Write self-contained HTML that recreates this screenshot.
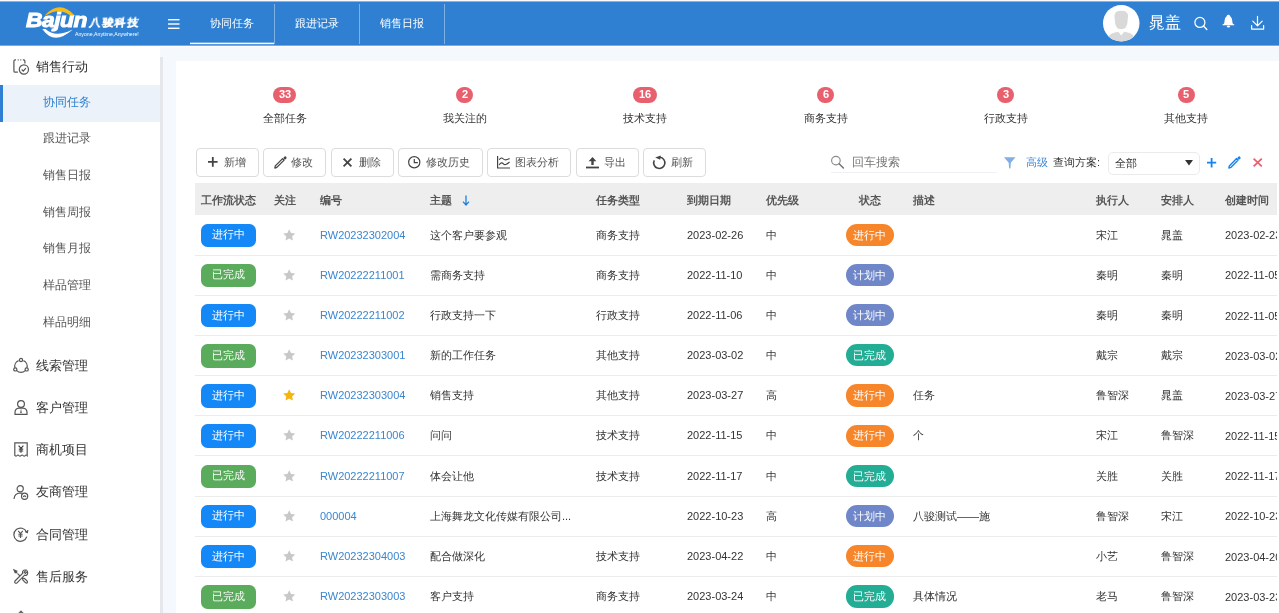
<!DOCTYPE html><html><head><meta charset="utf-8"><style>
html,body{margin:0;padding:0;width:1279px;height:613px;overflow:hidden;background:#fff;font-family:"Liberation Sans",sans-serif;}
.t{position:absolute;line-height:20px;white-space:nowrap;will-change:transform;}
.a{position:absolute;}
svg{position:absolute;overflow:visible;}
</style></head><body>
<div class="a" style="left:0;top:0;width:1279px;height:1px;background:#fafafa"></div>
<div class="a" style="left:0;top:1px;width:1279px;height:45px;background:#2f80d2"></div>
<div class="a" style="left:0;top:1px;width:1279px;height:1px;background:#8fb0d8"></div>
<div class="a" style="left:0;top:45px;width:1279px;height:1px;background:#7ea9dc"></div>
<div class="a" style="left:160px;top:47px;width:1119px;height:566px;background:#f5f8fd"></div>
<div class="a" style="left:160px;top:57px;width:3px;height:556px;background:#e6e7ea"></div>
<div class="a" style="left:176px;top:61px;width:1103px;height:552px;background:#fff"></div>
<svg style="left:0;top:0" width="160" height="46" viewBox="0 0 160 46">
<path d="M45 15.2 Q60 -1.2 75.2 16 L71 16.3 Q60 6.5 45.6 15.6 Z" fill="#f6bb17"/>
<path d="M42.3 29 Q54 46 72.5 29.8 L71.5 30 Q55 38 45.5 29 Z" fill="#fff"/>
</svg>
<div class="t" style="left:25.5px;top:10.4px;font-size:20px;line-height:20px;font-weight:bold;font-style:italic;color:#fff;letter-spacing:-0.4px;-webkit-text-stroke:1px #fff;transform:scaleX(1.14);transform-origin:0 0">Bajun</div>
<div class="t" style="left:88.6px;top:11.5px;font-size:11px;line-height:20px;font-weight:bold;color:#fff;letter-spacing:1.6px;-webkit-text-stroke:0.3px #fff;transform:skewX(-8deg) scaleY(0.95);transform-origin:0 15px">八骏科技</div>
<div class="t" style="left:74.5px;top:29px;font-size:5.2px;line-height:10px;color:#fff;">Anyone,Anytime,Anywhere!</div>
<svg style="left:168px;top:18px" width="12" height="12" viewBox="0 0 12 12"><rect x="0" y="1" width="11.5" height="1.4" fill="#fff"/><rect x="0" y="5.3" width="11.5" height="1.4" fill="#fff"/><rect x="0" y="9.6" width="11.5" height="1.4" fill="#fff"/></svg>
<div class="t" style="left:190.00px;width:84px;text-align:center;top:12.70px;font-size:11px;color:#fff;font-weight:normal;">协同任务</div>
<div class="a" style="left:274px;top:4px;width:1px;height:40px;background:rgba(255,255,255,0.38)"></div>
<div class="t" style="left:275.00px;width:84px;text-align:center;top:12.70px;font-size:11px;color:#fff;font-weight:normal;">跟进记录</div>
<div class="a" style="left:359px;top:4px;width:1px;height:40px;background:rgba(255,255,255,0.38)"></div>
<div class="t" style="left:360.00px;width:84px;text-align:center;top:12.70px;font-size:11px;color:#fff;font-weight:normal;">销售日报</div>
<div class="a" style="left:444px;top:4px;width:1px;height:40px;background:rgba(255,255,255,0.38)"></div>
<div class="a" style="left:190px;top:42px;width:84px;height:1px;background:rgba(255,255,255,0.35)"></div>
<div class="a" style="left:190px;top:43px;width:84px;height:1px;background:#fff"></div>
<div class="a" style="left:190px;top:44px;width:84px;height:1px;background:rgba(255,255,255,0.2)"></div>
<svg style="left:1102.6px;top:4.6px" width="36.5" height="36.5" viewBox="0 0 37 37">
<circle cx="18.5" cy="18.5" r="18.5" fill="#fff"/>
<clipPath id="avc"><circle cx="18.5" cy="18.5" r="18.5"/></clipPath>
<g clip-path="url(#avc)" fill="#d9d9d9">
<path d="M11.6 11 Q11.6 5.8 18.5 5.8 Q25.4 5.8 25.4 11 L24.8 17.5 Q24.2 24.6 18.5 24.6 Q12.8 24.6 12.2 17.5 Z"/>
<path d="M4 37 Q5 29 12 28 L15.5 27 L18.5 31 L21.5 27 L25 28 Q32 29 33 37 Z"/>
</g></svg>
<div class="t" style="left:1149px;top:13.10px;font-size:16px;color:#fff;font-weight:normal;">晁盖</div>
<svg style="left:1194px;top:16.5px" width="14" height="14" viewBox="0 0 14 14"><circle cx="5.9" cy="5.4" r="5" fill="none" stroke="#fff" stroke-width="1.25"/><line x1="9.5" y1="9.1" x2="12.8" y2="12.4" stroke="#fff" stroke-width="1.4" stroke-linecap="round"/></svg>
<svg style="left:1222px;top:14px" width="13" height="14" viewBox="0 0 13 14"><path d="M6.4 0.8 Q7.7 0.8 8.2 2.2 Q10 3.4 10.2 6.6 L10.5 9 Q10.9 10.1 12.3 10.6 L12.3 11.3 L0.5 11.3 L0.5 10.6 Q1.9 10.1 2.3 9 L2.6 6.6 Q2.8 3.4 4.6 2.2 Q5.1 0.8 6.4 0.8 Z" fill="#fff"/><ellipse cx="6.4" cy="12.5" rx="1.7" ry="1.05" fill="#fff"/></svg>
<svg style="left:1250px;top:16px" width="15" height="14" viewBox="0 0 15 14"><path d="M7.5 0.4 L7.5 9.8 M2.8 5.2 L7.5 9.9 L12.2 5.2" fill="none" stroke="#fff" stroke-width="1.2" stroke-linecap="round" stroke-linejoin="round"/><path d="M1.6 9.6 L1.6 13 L13.6 13 L13.6 9.6" fill="none" stroke="#fff" stroke-width="1.25" stroke-linecap="round" stroke-linejoin="round"/></svg>
<svg style="left:13px;top:59.2px" width="16" height="16" viewBox="0 0 16 16"><path d="M4.8 13.2 L2.2 13.2 Q0.9 13.2 0.9 11.9 L0.9 2.2 Q0.9 0.9 2.2 0.9 L3 0.9 M4.7 0.9 L5.7 0.9 M7.3 0.9 L8.3 0.9 M9.9 0.9 L10.6 0.9 Q11.9 0.9 11.9 2.2 L11.9 4.4" fill="none" stroke="#555" stroke-width="1.2"/><circle cx="10.9" cy="10.5" r="4.6" fill="#fff" stroke="#555" stroke-width="1.2"/><path d="M8.7 10.5 L10.3 12.1 L12.9 9.2" fill="none" stroke="#555" stroke-width="1.2"/></svg>
<div class="t" style="left:36px;top:56.50px;font-size:13px;color:#333;font-weight:normal;">销售行动</div>
<div class="a" style="left:0;top:85px;width:160px;height:36.5px;background:#ebf2fa"></div>
<div class="a" style="left:0;top:85px;width:3px;height:36.5px;background:#2f80d2"></div>
<div class="t" style="left:43px;top:91.60px;font-size:12px;color:#2f80d2;font-weight:normal;">协同任务</div>
<div class="t" style="left:43px;top:128.25px;font-size:12px;color:#555;font-weight:normal;">跟进记录</div>
<div class="t" style="left:43px;top:164.90px;font-size:12px;color:#555;font-weight:normal;">销售日报</div>
<div class="t" style="left:43px;top:201.55px;font-size:12px;color:#555;font-weight:normal;">销售周报</div>
<div class="t" style="left:43px;top:238.20px;font-size:12px;color:#555;font-weight:normal;">销售月报</div>
<div class="t" style="left:43px;top:274.85px;font-size:12px;color:#555;font-weight:normal;">样品管理</div>
<div class="t" style="left:43px;top:311.50px;font-size:12px;color:#555;font-weight:normal;">样品明细</div>
<div class="t" style="left:36px;top:355.50px;font-size:13px;color:#333;font-weight:normal;">线索管理</div>
<div class="t" style="left:36px;top:397.78px;font-size:13px;color:#333;font-weight:normal;">客户管理</div>
<div class="t" style="left:36px;top:440.06px;font-size:13px;color:#333;font-weight:normal;">商机项目</div>
<div class="t" style="left:36px;top:482.34px;font-size:13px;color:#333;font-weight:normal;">友商管理</div>
<div class="t" style="left:36px;top:524.62px;font-size:13px;color:#333;font-weight:normal;">合同管理</div>
<div class="t" style="left:36px;top:566.90px;font-size:13px;color:#333;font-weight:normal;">售后服务</div>
<svg style="left:13px;top:358px" width="16" height="15" viewBox="0 0 16 15"><path d="M5.6 2.6 A6 6 0 0 0 2 9.8 M13.9 9.8 A6 6 0 0 0 10.4 2.6 M3.8 12.6 A6 6 0 0 0 12.2 12.6" fill="none" stroke="#555" stroke-width="1.2"/><circle cx="8" cy="2" r="1.6" fill="#fff" stroke="#555" stroke-width="1.2"/><circle cx="2.3" cy="11.4" r="1.6" fill="#fff" stroke="#555" stroke-width="1.2"/><circle cx="13.7" cy="11.4" r="1.6" fill="#fff" stroke="#555" stroke-width="1.2"/></svg>
<svg style="left:14px;top:400px" width="14" height="15" viewBox="0 0 14 15"><circle cx="7" cy="4" r="3.4" fill="none" stroke="#555" stroke-width="1.2"/><path d="M1 14.3 L1 12.5 Q1 8.6 5 8.2 L9 8.2 Q13 8.6 13 12.5 L13 14.3 Z" fill="none" stroke="#555" stroke-width="1.2"/><path d="M7 8.6 L6.2 12.5 L7 13.6 L7.8 12.5 Z" fill="#666"/></svg>
<svg style="left:14px;top:442px" width="14" height="15" viewBox="0 0 14 15"><path d="M0.8 0.8 L13.2 0.8 L13.2 13.6 Q12.2 12.4 11.2 13.6 Q10.2 14.6 9.2 13.6 Q8.2 12.4 7 13.6 Q6 14.6 5 13.6 Q4 12.4 2.9 13.6 Q1.9 14.6 0.8 13.4 Z" fill="none" stroke="#555" stroke-width="1.2"/><path d="M4.6 3.6 L7 6.4 L9.4 3.6 M7 6.4 L7 10.8 M4.8 7.2 L9.2 7.2 M4.8 9 L9.2 9" fill="none" stroke="#444" stroke-width="1.2"/></svg>
<svg style="left:13px;top:485px" width="16" height="15" viewBox="0 0 16 15"><circle cx="7.2" cy="3.8" r="3.1" fill="none" stroke="#555" stroke-width="1.2"/><path d="M1 14 Q1.4 8.2 7.2 8 Q8.6 8 9.6 8.4" fill="none" stroke="#555" stroke-width="1.2"/><circle cx="11.6" cy="11.2" r="3.1" fill="none" stroke="#555" stroke-width="1.2"/><path d="M10.2 11.8 Q11.6 10 13 11.8" fill="none" stroke="#555" stroke-width="1.1"/></svg>
<svg style="left:13px;top:527px" width="16" height="15" viewBox="0 0 16 15"><path d="M13.6 5.2 A6.6 6.6 0 1 0 13.8 9.6" fill="none" stroke="#555" stroke-width="1.2"/><path d="M12.2 4.4 L14.4 5.6 L14.8 3" fill="none" stroke="#555" stroke-width="1.2"/><path d="M5.2 3.8 L7.5 6.6 L9.8 3.8 M7.5 6.6 L7.5 11 M5.4 7.3 L9.6 7.3 M5.4 9 L9.6 9" fill="none" stroke="#555" stroke-width="1.1"/></svg>
<svg style="left:13px;top:569px" width="16" height="15" viewBox="0 0 16 15"><path d="M1.6 1.6 L4.4 4.4 M3.8 2.2 L2.2 3.8 L1 1 Z" fill="none" stroke="#555" stroke-width="1.2"/><path d="M4.6 4.6 L9.4 9.4 L10 11.2 L12.6 13.8 Q13.6 14.4 14.2 13.8 Q14.8 13.2 14.2 12.2 L11.6 9.6 L9.8 9 " fill="none" stroke="#555" stroke-width="1.2"/><path d="M14.4 2.4 L12.4 4.4 L11.2 3.2 L13.2 1.2 Q10.4 0.4 9.6 2.6 Q9.4 3.6 9.8 4.2 L2 12 Q1.2 13.2 2.2 14 Q3.2 14.6 4 13.8 L11.6 6.2 Q12.4 6.6 13.2 6.4 Q15.2 5.6 14.4 2.4 Z" fill="#fff" stroke="#555" stroke-width="1.2"/></svg>
<svg style="left:17px;top:606px" width="8" height="7" viewBox="0 0 8 7"><path d="M4 4.3 L1.3 7 L6.7 7 Z" fill="#666"/></svg>
<div class="a" style="left:272.75px;top:86.8px;width:23.5px;height:16.5px;border-radius:8.5px;background:#e8606e"></div>
<div class="t" style="left:264.50px;width:40px;text-align:center;top:84.30px;font-size:11px;color:#fff;font-weight:bold;">33</div>
<div class="t" style="left:234.50px;width:100px;text-align:center;top:107.70px;font-size:11px;color:#333;font-weight:normal;">全部任务</div>
<div class="a" style="left:456.36px;top:86.8px;width:17px;height:16.5px;border-radius:8.5px;background:#e8606e"></div>
<div class="t" style="left:444.86px;width:40px;text-align:center;top:84.30px;font-size:11px;color:#fff;font-weight:bold;">2</div>
<div class="t" style="left:414.86px;width:100px;text-align:center;top:107.70px;font-size:11px;color:#333;font-weight:normal;">我关注的</div>
<div class="a" style="left:633.47px;top:86.8px;width:23.5px;height:16.5px;border-radius:8.5px;background:#e8606e"></div>
<div class="t" style="left:625.22px;width:40px;text-align:center;top:84.30px;font-size:11px;color:#fff;font-weight:bold;">16</div>
<div class="t" style="left:595.22px;width:100px;text-align:center;top:107.70px;font-size:11px;color:#333;font-weight:normal;">技术支持</div>
<div class="a" style="left:817.08px;top:86.8px;width:17px;height:16.5px;border-radius:8.5px;background:#e8606e"></div>
<div class="t" style="left:805.58px;width:40px;text-align:center;top:84.30px;font-size:11px;color:#fff;font-weight:bold;">6</div>
<div class="t" style="left:775.58px;width:100px;text-align:center;top:107.70px;font-size:11px;color:#333;font-weight:normal;">商务支持</div>
<div class="a" style="left:997.44px;top:86.8px;width:17px;height:16.5px;border-radius:8.5px;background:#e8606e"></div>
<div class="t" style="left:985.94px;width:40px;text-align:center;top:84.30px;font-size:11px;color:#fff;font-weight:bold;">3</div>
<div class="t" style="left:955.94px;width:100px;text-align:center;top:107.70px;font-size:11px;color:#333;font-weight:normal;">行政支持</div>
<div class="a" style="left:1177.80px;top:86.8px;width:17px;height:16.5px;border-radius:8.5px;background:#e8606e"></div>
<div class="t" style="left:1166.30px;width:40px;text-align:center;top:84.30px;font-size:11px;color:#fff;font-weight:bold;">5</div>
<div class="t" style="left:1136.30px;width:100px;text-align:center;top:107.70px;font-size:11px;color:#333;font-weight:normal;">其他支持</div>
<div class="a" style="left:196px;top:148px;width:61.0px;height:26.6px;border:1px solid #dcdcdc;border-radius:4px;background:#fff"></div>
<div class="t" style="left:224px;top:151.50px;font-size:11px;color:#555;font-weight:normal;">新增</div>
<div class="a" style="left:263px;top:148px;width:61.0px;height:26.6px;border:1px solid #dcdcdc;border-radius:4px;background:#fff"></div>
<div class="t" style="left:291.3px;top:151.50px;font-size:11px;color:#555;font-weight:normal;">修改</div>
<div class="a" style="left:330.5px;top:148px;width:61.0px;height:26.6px;border:1px solid #dcdcdc;border-radius:4px;background:#fff"></div>
<div class="t" style="left:358.5px;top:151.50px;font-size:11px;color:#555;font-weight:normal;">删除</div>
<div class="a" style="left:398px;top:148px;width:82.5px;height:26.6px;border:1px solid #dcdcdc;border-radius:4px;background:#fff"></div>
<div class="t" style="left:425.6px;top:151.50px;font-size:11px;color:#555;font-weight:normal;">修改历史</div>
<div class="a" style="left:486.5px;top:148px;width:82.5px;height:26.6px;border:1px solid #dcdcdc;border-radius:4px;background:#fff"></div>
<div class="t" style="left:515px;top:151.50px;font-size:11px;color:#555;font-weight:normal;">图表分析</div>
<div class="a" style="left:575.5px;top:148px;width:61.0px;height:26.6px;border:1px solid #dcdcdc;border-radius:4px;background:#fff"></div>
<div class="t" style="left:603.8px;top:151.50px;font-size:11px;color:#555;font-weight:normal;">导出</div>
<div class="a" style="left:642.5px;top:148px;width:61.0px;height:26.6px;border:1px solid #dcdcdc;border-radius:4px;background:#fff"></div>
<div class="t" style="left:671px;top:151.50px;font-size:11px;color:#555;font-weight:normal;">刷新</div>
<svg style="left:208.4px;top:157px" width="10" height="10" viewBox="0 0 10 10"><path d="M4.8 0 L4.8 9.7 M0 4.85 L9.6 4.85" stroke="#444" stroke-width="1.8"/></svg>
<svg style="left:273.5px;top:155.8px" width="13" height="13" viewBox="0 0 13 13"><path d="M0.9 12.1 L1.3 9.9 L8.6 2.6 L10.1 4.1 L2.8 11.4 Z" fill="none" stroke="#444" stroke-width="1.3" stroke-linejoin="round"/><path d="M9.3 1.9 L10.6 0.5 Q11.2 0 11.8 0.6 L12.4 1.2 Q12.9 1.8 12.4 2.4 L11 3.7 Z" fill="#444"/></svg>
<svg style="left:343px;top:158px" width="9" height="9" viewBox="0 0 9 9"><path d="M0.6 0.6 L8.4 8.4 M8.4 0.6 L0.6 8.4" stroke="#444" stroke-width="1.8"/></svg>
<svg style="left:407.8px;top:156px" width="13" height="13" viewBox="0 0 13 13"><circle cx="6.25" cy="6.25" r="5.6" fill="none" stroke="#444" stroke-width="1.2"/><path d="M6.3 3 L6.3 6.7 L9.8 6.7" fill="none" stroke="#444" stroke-width="1.2"/></svg>
<svg style="left:497px;top:156px" width="13" height="13" viewBox="0 0 13 13"><path d="M0.6 0 L0.6 12 L13 12" fill="none" stroke="#444" stroke-width="1.2"/><path d="M2.2 3.8 C3.8 1.4 5.2 1.6 6.4 3 C7.6 4.4 9.2 4.4 12.6 2.6 M2.2 9 C3.8 6.4 5.2 6.4 6.4 7.8 C7.6 9.2 9.4 8.8 12.6 6" fill="none" stroke="#444" stroke-width="1.1"/></svg>
<svg style="left:586px;top:156px" width="13" height="13" viewBox="0 0 13 13"><path d="M6.5 1 L2.6 5.2 L5.3 5.2 L5.3 9 L7.7 9 L7.7 5.2 L10.4 5.2 Z" fill="#444"/><rect x="0" y="10.6" width="13" height="1.8" fill="#444"/></svg>
<svg style="left:653px;top:156px" width="13" height="13" viewBox="0 0 13 13"><path d="M1.3 4.3 A5.6 5.6 0 1 0 6.9 1.3" fill="none" stroke="#444" stroke-width="1.6"/><path d="M2.2 1.4 L7.8 -0.6 L7.2 3.8 Z" fill="#444"/></svg>
<svg style="left:831px;top:155px" width="14" height="14" viewBox="0 0 14 14"><circle cx="4.9" cy="5.6" r="4.3" fill="none" stroke="#8a8a8a" stroke-width="1.15"/><path d="M8.1 8.8 L12.4 13" stroke="#777" stroke-width="1.6" stroke-linecap="round"/></svg>
<div class="t" style="left:851.5px;top:152.20px;font-size:12px;color:#777;font-weight:normal;">回车搜索</div>
<div class="a" style="left:831px;top:172px;width:166px;height:1px;background:#eef0f3"></div>
<svg style="left:1004px;top:157px" width="12" height="12" viewBox="0 0 12 12"><path d="M0 0.2 L11.5 0.2 L6.8 5.8 L6.5 11 Q5.8 12 5.1 11 L4.7 5.8 Z" fill="#7fb0e5"/></svg>
<div class="t" style="left:1026px;top:152.00px;font-size:11px;color:#3f86d6;font-weight:normal;">高级</div>
<div class="t" style="left:1052.7px;top:152.20px;font-size:11px;color:#333;font-weight:normal;">查询方案:</div>
<div class="a" style="left:1108px;top:151.6px;width:89.5px;height:21.4px;border:1px solid #ebebeb;border-radius:5px;background:#fff"></div>
<div class="t" style="left:1115px;top:152.80px;font-size:11px;color:#333;font-weight:normal;">全部</div>
<svg style="left:1184.5px;top:160px" width="8" height="6" viewBox="0 0 8 6"><path d="M0 0 L8 0 L4 5.6 Z" fill="#333"/></svg>
<svg style="left:1207px;top:158px" width="10" height="10" viewBox="0 0 10 10"><path d="M4.6 0 L4.6 9.4 M0 4.7 L9.2 4.7" stroke="#1584f2" stroke-width="1.8"/></svg>
<svg style="left:1228px;top:156px" width="13" height="13" viewBox="0 0 13 13"><path d="M0.9 12.1 L1.3 9.9 L8.6 2.6 L10.1 4.1 L2.8 11.4 Z" fill="none" stroke="#1584f2" stroke-width="1.4" stroke-linejoin="round"/><path d="M9.3 1.9 L10.6 0.5 Q11.2 0 11.8 0.6 L12.4 1.2 Q12.9 1.8 12.4 2.4 L11 3.7 Z" fill="#1584f2"/></svg>
<svg style="left:1253px;top:158.3px" width="9.5" height="9" viewBox="0 0 9.5 9"><path d="M0.6 0.6 L8.8 8.4 M8.8 0.6 L0.6 8.4" stroke="#e8606e" stroke-width="1.8"/></svg>
<div class="a" style="left:194.5px;top:183px;width:1082.5px;height:32px;background:#eeeeee"></div>
<div class="t" style="left:200.9px;top:190.20px;font-size:11px;color:#555;font-weight:bold;">工作流状态</div>
<div class="t" style="left:274.4px;top:190.20px;font-size:11px;color:#555;font-weight:bold;">关注</div>
<div class="t" style="left:320.4px;top:190.20px;font-size:11px;color:#555;font-weight:bold;">编号</div>
<div class="t" style="left:430.4px;top:190.20px;font-size:11px;color:#555;font-weight:bold;">主题</div>
<div class="t" style="left:595.5px;top:190.20px;font-size:11px;color:#555;font-weight:bold;">任务类型</div>
<div class="t" style="left:687px;top:190.20px;font-size:11px;color:#555;font-weight:bold;">到期日期</div>
<div class="t" style="left:765.8px;top:190.20px;font-size:11px;color:#555;font-weight:bold;">优先级</div>
<div class="t" style="left:913px;top:190.20px;font-size:11px;color:#555;font-weight:bold;">描述</div>
<div class="t" style="left:1096.3px;top:190.20px;font-size:11px;color:#555;font-weight:bold;">执行人</div>
<div class="t" style="left:1160.9px;top:190.20px;font-size:11px;color:#555;font-weight:bold;">安排人</div>
<div class="t" style="left:1224.7px;top:190.20px;font-size:11px;color:#555;font-weight:bold;">创建时间</div>
<div class="t" style="left:839.60px;width:60px;text-align:center;top:190.20px;font-size:11px;color:#555;font-weight:bold;">状态</div>
<svg style="left:462px;top:195px" width="8" height="11" viewBox="0 0 8 11"><path d="M4 0.5 L4 9.5 M1 6.6 L4 10 L7 6.6" fill="none" stroke="#1f7fe0" stroke-width="1.3"/></svg>
<div class="a" style="left:1224px;top:215px;width:53px;height:400px;overflow:hidden">
<div class="t" style="left:0.7px;top:10.30px;font-size:11px;color:#333">2023-02-23</div>
<div class="t" style="left:0.7px;top:50.47px;font-size:11px;color:#333">2022-11-05</div>
<div class="t" style="left:0.7px;top:90.64px;font-size:11px;color:#333">2022-11-05</div>
<div class="t" style="left:0.7px;top:130.81px;font-size:11px;color:#333">2023-03-02</div>
<div class="t" style="left:0.7px;top:170.98px;font-size:11px;color:#333">2023-03-27</div>
<div class="t" style="left:0.7px;top:211.15px;font-size:11px;color:#333">2022-11-15</div>
<div class="t" style="left:0.7px;top:251.32px;font-size:11px;color:#333">2022-11-17</div>
<div class="t" style="left:0.7px;top:291.49px;font-size:11px;color:#333">2022-10-23</div>
<div class="t" style="left:0.7px;top:331.66px;font-size:11px;color:#333">2023-04-20</div>
<div class="t" style="left:0.7px;top:371.83px;font-size:11px;color:#333">2023-03-23</div>
</div>
<div class="a" style="left:194.5px;top:254.50px;width:1082.5px;height:1px;background:#ececec"></div>
<div class="a" style="left:201.3px;top:223.60px;width:54.5px;height:23.5px;border-radius:6.5px;background:#1588f8"></div>
<div class="t" style="left:200.80px;width:54px;text-align:center;top:224.20px;font-size:11px;color:#fff;font-weight:normal;">进行中</div>
<svg style="left:282.6px;top:228.60px" width="13" height="13" viewBox="0 0 13 13"><path d="M6.20 0.20 L7.99 4.03 L12.19 4.55 L9.10 7.44 L9.90 11.60 L6.20 9.55 L2.50 11.60 L3.30 7.44 L0.21 4.55 L4.41 4.03 Z" fill="#c8c8c8"/></svg>
<div class="t" style="left:319.8px;top:224.50px;font-size:11px;color:#3a86d0;font-weight:normal;">RW20232302004</div>
<div class="t" style="left:430.4px;top:224.50px;font-size:11px;color:#333;font-weight:normal;">这个客户要参观</div>
<div class="t" style="left:595.5px;top:224.50px;font-size:11px;color:#333;font-weight:normal;">商务支持</div>
<div class="t" style="left:686.8px;top:224.50px;font-size:11px;color:#333;font-weight:normal;">2023-02-26</div>
<div class="t" style="left:766px;top:224.50px;font-size:11px;color:#333;font-weight:normal;">中</div>
<div class="a" style="left:845.6px;top:223.80px;width:48px;height:22.2px;border-radius:11px;background:#f7862b"></div>
<div class="t" style="left:846.10px;width:47px;text-align:center;top:224.50px;font-size:11px;color:#fff;font-weight:normal;">进行中</div>
<div class="t" style="left:1096.3px;top:224.50px;font-size:11px;color:#333;font-weight:normal;">宋江</div>
<div class="t" style="left:1160.9px;top:224.50px;font-size:11px;color:#333;font-weight:normal;">晁盖</div>
<div class="a" style="left:194.5px;top:294.67px;width:1082.5px;height:1px;background:#ececec"></div>
<div class="a" style="left:201.3px;top:263.77px;width:54.5px;height:23.5px;border-radius:6.5px;background:#5aab5b"></div>
<div class="t" style="left:200.80px;width:54px;text-align:center;top:264.37px;font-size:11px;color:#fff;font-weight:normal;">已完成</div>
<svg style="left:282.6px;top:268.77px" width="13" height="13" viewBox="0 0 13 13"><path d="M6.20 0.20 L7.99 4.03 L12.19 4.55 L9.10 7.44 L9.90 11.60 L6.20 9.55 L2.50 11.60 L3.30 7.44 L0.21 4.55 L4.41 4.03 Z" fill="#c8c8c8"/></svg>
<div class="t" style="left:319.8px;top:264.67px;font-size:11px;color:#3a86d0;font-weight:normal;">RW20222211001</div>
<div class="t" style="left:430.4px;top:264.67px;font-size:11px;color:#333;font-weight:normal;">需商务支持</div>
<div class="t" style="left:595.5px;top:264.67px;font-size:11px;color:#333;font-weight:normal;">商务支持</div>
<div class="t" style="left:686.8px;top:264.67px;font-size:11px;color:#333;font-weight:normal;">2022-11-10</div>
<div class="t" style="left:766px;top:264.67px;font-size:11px;color:#333;font-weight:normal;">中</div>
<div class="a" style="left:845.6px;top:263.97px;width:48px;height:22.2px;border-radius:11px;background:#6f87c9"></div>
<div class="t" style="left:846.10px;width:47px;text-align:center;top:264.67px;font-size:11px;color:#fff;font-weight:normal;">计划中</div>
<div class="t" style="left:1096.3px;top:264.67px;font-size:11px;color:#333;font-weight:normal;">秦明</div>
<div class="t" style="left:1160.9px;top:264.67px;font-size:11px;color:#333;font-weight:normal;">秦明</div>
<div class="a" style="left:194.5px;top:334.84px;width:1082.5px;height:1px;background:#ececec"></div>
<div class="a" style="left:201.3px;top:303.94px;width:54.5px;height:23.5px;border-radius:6.5px;background:#1588f8"></div>
<div class="t" style="left:200.80px;width:54px;text-align:center;top:304.54px;font-size:11px;color:#fff;font-weight:normal;">进行中</div>
<svg style="left:282.6px;top:308.94px" width="13" height="13" viewBox="0 0 13 13"><path d="M6.20 0.20 L7.99 4.03 L12.19 4.55 L9.10 7.44 L9.90 11.60 L6.20 9.55 L2.50 11.60 L3.30 7.44 L0.21 4.55 L4.41 4.03 Z" fill="#c8c8c8"/></svg>
<div class="t" style="left:319.8px;top:304.84px;font-size:11px;color:#3a86d0;font-weight:normal;">RW20222211002</div>
<div class="t" style="left:430.4px;top:304.84px;font-size:11px;color:#333;font-weight:normal;">行政支持一下</div>
<div class="t" style="left:595.5px;top:304.84px;font-size:11px;color:#333;font-weight:normal;">行政支持</div>
<div class="t" style="left:686.8px;top:304.84px;font-size:11px;color:#333;font-weight:normal;">2022-11-06</div>
<div class="t" style="left:766px;top:304.84px;font-size:11px;color:#333;font-weight:normal;">中</div>
<div class="a" style="left:845.6px;top:304.14px;width:48px;height:22.2px;border-radius:11px;background:#6f87c9"></div>
<div class="t" style="left:846.10px;width:47px;text-align:center;top:304.84px;font-size:11px;color:#fff;font-weight:normal;">计划中</div>
<div class="t" style="left:1096.3px;top:304.84px;font-size:11px;color:#333;font-weight:normal;">秦明</div>
<div class="t" style="left:1160.9px;top:304.84px;font-size:11px;color:#333;font-weight:normal;">秦明</div>
<div class="a" style="left:194.5px;top:375.01px;width:1082.5px;height:1px;background:#ececec"></div>
<div class="a" style="left:201.3px;top:344.11px;width:54.5px;height:23.5px;border-radius:6.5px;background:#5aab5b"></div>
<div class="t" style="left:200.80px;width:54px;text-align:center;top:344.71px;font-size:11px;color:#fff;font-weight:normal;">已完成</div>
<svg style="left:282.6px;top:349.11px" width="13" height="13" viewBox="0 0 13 13"><path d="M6.20 0.20 L7.99 4.03 L12.19 4.55 L9.10 7.44 L9.90 11.60 L6.20 9.55 L2.50 11.60 L3.30 7.44 L0.21 4.55 L4.41 4.03 Z" fill="#c8c8c8"/></svg>
<div class="t" style="left:319.8px;top:345.01px;font-size:11px;color:#3a86d0;font-weight:normal;">RW20232303001</div>
<div class="t" style="left:430.4px;top:345.01px;font-size:11px;color:#333;font-weight:normal;">新的工作任务</div>
<div class="t" style="left:595.5px;top:345.01px;font-size:11px;color:#333;font-weight:normal;">其他支持</div>
<div class="t" style="left:686.8px;top:345.01px;font-size:11px;color:#333;font-weight:normal;">2023-03-02</div>
<div class="t" style="left:766px;top:345.01px;font-size:11px;color:#333;font-weight:normal;">中</div>
<div class="a" style="left:845.6px;top:344.31px;width:48px;height:22.2px;border-radius:11px;background:#24ad95"></div>
<div class="t" style="left:846.10px;width:47px;text-align:center;top:345.01px;font-size:11px;color:#fff;font-weight:normal;">已完成</div>
<div class="t" style="left:1096.3px;top:345.01px;font-size:11px;color:#333;font-weight:normal;">戴宗</div>
<div class="t" style="left:1160.9px;top:345.01px;font-size:11px;color:#333;font-weight:normal;">戴宗</div>
<div class="a" style="left:194.5px;top:415.18px;width:1082.5px;height:1px;background:#ececec"></div>
<div class="a" style="left:201.3px;top:384.28px;width:54.5px;height:23.5px;border-radius:6.5px;background:#1588f8"></div>
<div class="t" style="left:200.80px;width:54px;text-align:center;top:384.88px;font-size:11px;color:#fff;font-weight:normal;">进行中</div>
<svg style="left:282.6px;top:389.28px" width="13" height="13" viewBox="0 0 13 13"><path d="M6.20 0.20 L7.99 4.03 L12.19 4.55 L9.10 7.44 L9.90 11.60 L6.20 9.55 L2.50 11.60 L3.30 7.44 L0.21 4.55 L4.41 4.03 Z" fill="#f5b40f"/></svg>
<div class="t" style="left:319.8px;top:385.18px;font-size:11px;color:#3a86d0;font-weight:normal;">RW20232303004</div>
<div class="t" style="left:430.4px;top:385.18px;font-size:11px;color:#333;font-weight:normal;">销售支持</div>
<div class="t" style="left:595.5px;top:385.18px;font-size:11px;color:#333;font-weight:normal;">其他支持</div>
<div class="t" style="left:686.8px;top:385.18px;font-size:11px;color:#333;font-weight:normal;">2023-03-27</div>
<div class="t" style="left:766px;top:385.18px;font-size:11px;color:#333;font-weight:normal;">高</div>
<div class="a" style="left:845.6px;top:384.48px;width:48px;height:22.2px;border-radius:11px;background:#f7862b"></div>
<div class="t" style="left:846.10px;width:47px;text-align:center;top:385.18px;font-size:11px;color:#fff;font-weight:normal;">进行中</div>
<div class="t" style="left:913px;top:385.18px;font-size:11px;color:#333;font-weight:normal;">任务</div>
<div class="t" style="left:1096.3px;top:385.18px;font-size:11px;color:#333;font-weight:normal;">鲁智深</div>
<div class="t" style="left:1160.9px;top:385.18px;font-size:11px;color:#333;font-weight:normal;">晁盖</div>
<div class="a" style="left:194.5px;top:455.35px;width:1082.5px;height:1px;background:#ececec"></div>
<div class="a" style="left:201.3px;top:424.45px;width:54.5px;height:23.5px;border-radius:6.5px;background:#1588f8"></div>
<div class="t" style="left:200.80px;width:54px;text-align:center;top:425.05px;font-size:11px;color:#fff;font-weight:normal;">进行中</div>
<svg style="left:282.6px;top:429.45px" width="13" height="13" viewBox="0 0 13 13"><path d="M6.20 0.20 L7.99 4.03 L12.19 4.55 L9.10 7.44 L9.90 11.60 L6.20 9.55 L2.50 11.60 L3.30 7.44 L0.21 4.55 L4.41 4.03 Z" fill="#c8c8c8"/></svg>
<div class="t" style="left:319.8px;top:425.35px;font-size:11px;color:#3a86d0;font-weight:normal;">RW20222211006</div>
<div class="t" style="left:430.4px;top:425.35px;font-size:11px;color:#333;font-weight:normal;">问问</div>
<div class="t" style="left:595.5px;top:425.35px;font-size:11px;color:#333;font-weight:normal;">技术支持</div>
<div class="t" style="left:686.8px;top:425.35px;font-size:11px;color:#333;font-weight:normal;">2022-11-15</div>
<div class="t" style="left:766px;top:425.35px;font-size:11px;color:#333;font-weight:normal;">中</div>
<div class="a" style="left:845.6px;top:424.65px;width:48px;height:22.2px;border-radius:11px;background:#f7862b"></div>
<div class="t" style="left:846.10px;width:47px;text-align:center;top:425.35px;font-size:11px;color:#fff;font-weight:normal;">进行中</div>
<div class="t" style="left:913px;top:425.35px;font-size:11px;color:#333;font-weight:normal;">个</div>
<div class="t" style="left:1096.3px;top:425.35px;font-size:11px;color:#333;font-weight:normal;">宋江</div>
<div class="t" style="left:1160.9px;top:425.35px;font-size:11px;color:#333;font-weight:normal;">鲁智深</div>
<div class="a" style="left:194.5px;top:495.52px;width:1082.5px;height:1px;background:#ececec"></div>
<div class="a" style="left:201.3px;top:464.62px;width:54.5px;height:23.5px;border-radius:6.5px;background:#5aab5b"></div>
<div class="t" style="left:200.80px;width:54px;text-align:center;top:465.22px;font-size:11px;color:#fff;font-weight:normal;">已完成</div>
<svg style="left:282.6px;top:469.62px" width="13" height="13" viewBox="0 0 13 13"><path d="M6.20 0.20 L7.99 4.03 L12.19 4.55 L9.10 7.44 L9.90 11.60 L6.20 9.55 L2.50 11.60 L3.30 7.44 L0.21 4.55 L4.41 4.03 Z" fill="#c8c8c8"/></svg>
<div class="t" style="left:319.8px;top:465.52px;font-size:11px;color:#3a86d0;font-weight:normal;">RW20222211007</div>
<div class="t" style="left:430.4px;top:465.52px;font-size:11px;color:#333;font-weight:normal;">体会让他</div>
<div class="t" style="left:595.5px;top:465.52px;font-size:11px;color:#333;font-weight:normal;">技术支持</div>
<div class="t" style="left:686.8px;top:465.52px;font-size:11px;color:#333;font-weight:normal;">2022-11-17</div>
<div class="t" style="left:766px;top:465.52px;font-size:11px;color:#333;font-weight:normal;">中</div>
<div class="a" style="left:845.6px;top:464.82px;width:48px;height:22.2px;border-radius:11px;background:#24ad95"></div>
<div class="t" style="left:846.10px;width:47px;text-align:center;top:465.52px;font-size:11px;color:#fff;font-weight:normal;">已完成</div>
<div class="t" style="left:1096.3px;top:465.52px;font-size:11px;color:#333;font-weight:normal;">关胜</div>
<div class="t" style="left:1160.9px;top:465.52px;font-size:11px;color:#333;font-weight:normal;">关胜</div>
<div class="a" style="left:194.5px;top:535.69px;width:1082.5px;height:1px;background:#ececec"></div>
<div class="a" style="left:201.3px;top:504.79px;width:54.5px;height:23.5px;border-radius:6.5px;background:#1588f8"></div>
<div class="t" style="left:200.80px;width:54px;text-align:center;top:505.39px;font-size:11px;color:#fff;font-weight:normal;">进行中</div>
<svg style="left:282.6px;top:509.79px" width="13" height="13" viewBox="0 0 13 13"><path d="M6.20 0.20 L7.99 4.03 L12.19 4.55 L9.10 7.44 L9.90 11.60 L6.20 9.55 L2.50 11.60 L3.30 7.44 L0.21 4.55 L4.41 4.03 Z" fill="#c8c8c8"/></svg>
<div class="t" style="left:319.8px;top:505.69px;font-size:11px;color:#3a86d0;font-weight:normal;">000004</div>
<div class="t" style="left:430.4px;top:505.69px;font-size:11px;color:#333;font-weight:normal;">上海舞龙文化传媒有限公司...</div>
<div class="t" style="left:686.8px;top:505.69px;font-size:11px;color:#333;font-weight:normal;">2022-10-23</div>
<div class="t" style="left:766px;top:505.69px;font-size:11px;color:#333;font-weight:normal;">高</div>
<div class="a" style="left:845.6px;top:504.99px;width:48px;height:22.2px;border-radius:11px;background:#6f87c9"></div>
<div class="t" style="left:846.10px;width:47px;text-align:center;top:505.69px;font-size:11px;color:#fff;font-weight:normal;">计划中</div>
<div class="t" style="left:913px;top:505.69px;font-size:11px;color:#333;font-weight:normal;">八骏测试——施</div>
<div class="t" style="left:1096.3px;top:505.69px;font-size:11px;color:#333;font-weight:normal;">鲁智深</div>
<div class="t" style="left:1160.9px;top:505.69px;font-size:11px;color:#333;font-weight:normal;">宋江</div>
<div class="a" style="left:194.5px;top:575.86px;width:1082.5px;height:1px;background:#ececec"></div>
<div class="a" style="left:201.3px;top:544.96px;width:54.5px;height:23.5px;border-radius:6.5px;background:#1588f8"></div>
<div class="t" style="left:200.80px;width:54px;text-align:center;top:545.56px;font-size:11px;color:#fff;font-weight:normal;">进行中</div>
<svg style="left:282.6px;top:549.96px" width="13" height="13" viewBox="0 0 13 13"><path d="M6.20 0.20 L7.99 4.03 L12.19 4.55 L9.10 7.44 L9.90 11.60 L6.20 9.55 L2.50 11.60 L3.30 7.44 L0.21 4.55 L4.41 4.03 Z" fill="#c8c8c8"/></svg>
<div class="t" style="left:319.8px;top:545.86px;font-size:11px;color:#3a86d0;font-weight:normal;">RW20232304003</div>
<div class="t" style="left:430.4px;top:545.86px;font-size:11px;color:#333;font-weight:normal;">配合做深化</div>
<div class="t" style="left:595.5px;top:545.86px;font-size:11px;color:#333;font-weight:normal;">技术支持</div>
<div class="t" style="left:686.8px;top:545.86px;font-size:11px;color:#333;font-weight:normal;">2023-04-22</div>
<div class="t" style="left:766px;top:545.86px;font-size:11px;color:#333;font-weight:normal;">中</div>
<div class="a" style="left:845.6px;top:545.16px;width:48px;height:22.2px;border-radius:11px;background:#f7862b"></div>
<div class="t" style="left:846.10px;width:47px;text-align:center;top:545.86px;font-size:11px;color:#fff;font-weight:normal;">进行中</div>
<div class="t" style="left:1096.3px;top:545.86px;font-size:11px;color:#333;font-weight:normal;">小艺</div>
<div class="t" style="left:1160.9px;top:545.86px;font-size:11px;color:#333;font-weight:normal;">鲁智深</div>
<div class="a" style="left:194.5px;top:616.03px;width:1082.5px;height:1px;background:#ececec"></div>
<div class="a" style="left:201.3px;top:585.13px;width:54.5px;height:23.5px;border-radius:6.5px;background:#5aab5b"></div>
<div class="t" style="left:200.80px;width:54px;text-align:center;top:585.73px;font-size:11px;color:#fff;font-weight:normal;">已完成</div>
<svg style="left:282.6px;top:590.13px" width="13" height="13" viewBox="0 0 13 13"><path d="M6.20 0.20 L7.99 4.03 L12.19 4.55 L9.10 7.44 L9.90 11.60 L6.20 9.55 L2.50 11.60 L3.30 7.44 L0.21 4.55 L4.41 4.03 Z" fill="#c8c8c8"/></svg>
<div class="t" style="left:319.8px;top:586.03px;font-size:11px;color:#3a86d0;font-weight:normal;">RW20232303003</div>
<div class="t" style="left:430.4px;top:586.03px;font-size:11px;color:#333;font-weight:normal;">客户支持</div>
<div class="t" style="left:595.5px;top:586.03px;font-size:11px;color:#333;font-weight:normal;">商务支持</div>
<div class="t" style="left:686.8px;top:586.03px;font-size:11px;color:#333;font-weight:normal;">2023-03-24</div>
<div class="t" style="left:766px;top:586.03px;font-size:11px;color:#333;font-weight:normal;">中</div>
<div class="a" style="left:845.6px;top:585.33px;width:48px;height:22.2px;border-radius:11px;background:#24ad95"></div>
<div class="t" style="left:846.10px;width:47px;text-align:center;top:586.03px;font-size:11px;color:#fff;font-weight:normal;">已完成</div>
<div class="t" style="left:913px;top:586.03px;font-size:11px;color:#333;font-weight:normal;">具体情况</div>
<div class="t" style="left:1096.3px;top:586.03px;font-size:11px;color:#333;font-weight:normal;">老马</div>
<div class="t" style="left:1160.9px;top:586.03px;font-size:11px;color:#333;font-weight:normal;">鲁智深</div>
</body></html>
